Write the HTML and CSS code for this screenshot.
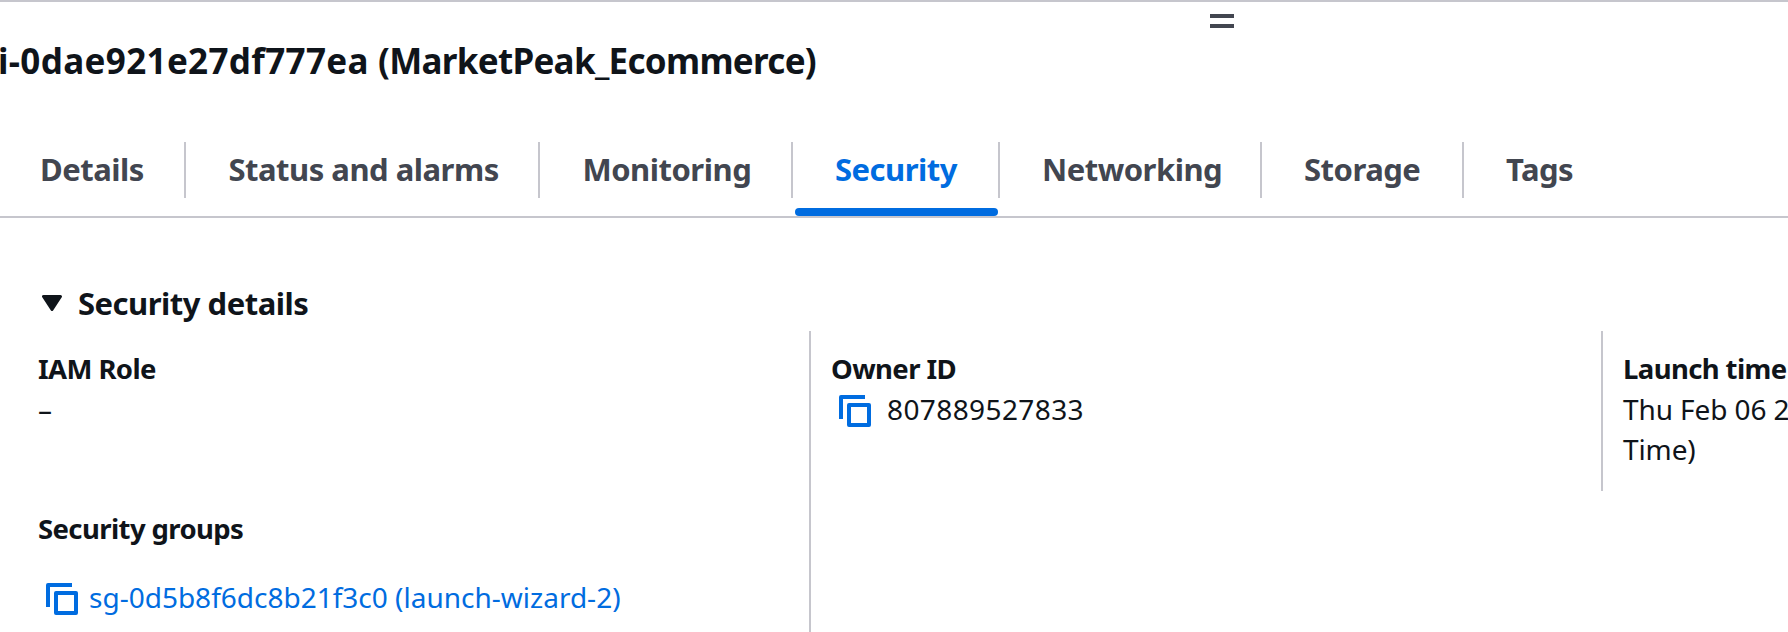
FILE: index.html
```html
<!DOCTYPE html>
<html lang="en">
<head>
<meta charset="utf-8">
<title>Instance details</title>
<link rel="stylesheet" href="styles.css">
</head>
<body>
<svg class="sprite" width="0" height="0" aria-hidden="true">
  <symbol id="copy" viewBox="0 0 32 32">
    <path d="M26 2H2v22" fill="none" stroke="currentColor" stroke-width="4" stroke-linejoin="round"/>
    <path d="M10 10h20v20H10z" fill="none" stroke="currentColor" stroke-width="4" stroke-linejoin="round"/>
  </symbol>
</svg>
<section class="panel">
  <div class="handle"><svg width="24" height="14" viewBox="0 0 24 14"><path d="M0 0h24v4H0zM0 10h24v4H0z" fill="#424650"/></svg></div>
  <h1 class="title"><span class="instance-id">i-0dae921e27df777ea</span> <span class="instance-name">(MarketPeak_Ecommerce)</span></h1>
  <nav class="tabs">
    <a class="tab">Details</a>
    <a class="tab">Status and alarms</a>
    <a class="tab">Monitoring</a>
    <a class="tab active">Security</a>
    <a class="tab">Networking</a>
    <a class="tab">Storage</a>
    <a class="tab last">Tags</a>
  </nav>
  <h2 class="section-head">
    <svg class="caret" width="20" height="16" viewBox="0 0 20 16"><path d="M1.5 1.5h17L10 14.5z" fill="#0f141a" stroke="#0f141a" stroke-width="3" stroke-linejoin="round"/></svg>
    <span>Security details</span>
  </h2>
  <div class="columns">
    <div class="col first">
      <div class="label">IAM Role</div>
      <div class="value">–</div>
      <div class="label groups">Security groups</div>
      <div class="copy-row link"><svg class="copy" width="32" height="32"><use href="#copy"/></svg><a class="sg">sg-0d5b8f6dc8b21f3c0 (launch-wizard-2)</a></div>
    </div>
    <div class="col owner">
      <div class="label">Owner ID</div>
      <div class="copy-row"><svg class="copy" width="32" height="32"><use href="#copy"/></svg><span class="number">807889527833</span></div>
    </div>
    <div class="col launch">
      <div class="label">Launch time</div>
      <div class="value">Thu Feb 06 2</div>
      <div class="value">Time)</div>
    </div>
  </div>
</section>
</body>
</html>
```
FILE: styles.css
```css
* { box-sizing: border-box; }
body {
  margin: 0;
  background: #fff;
  color: #0f141a;
  font-family: "Noto Sans", "Open Sans", sans-serif;
  overflow: hidden;
}
.sprite { display: block; }
.panel {
  height: 632px;
  border-top: 2px solid #c6c6cd;
  display: flex;
  flex-direction: column;
  overflow: hidden;
}
.handle {
  height: 26px;
  padding: 12px 0 0 1210px;
  flex: none;
}
.handle svg { display: block; }
.title {
  margin: 11px 0 0 -2px;
  font-size: 35px;
  line-height: 44px;
  font-weight: 700;
  white-space: nowrap;
  flex: none;
}
.instance-id { letter-spacing: 0.35px; }
.instance-name { letter-spacing: -0.7px; }
.tabs {
  display: grid;
  grid-template-columns: 186px 354px 252.5px 207px 262px 202px 1fr;
  height: 135px;
  padding: 59px 0 18px;
  border-bottom: 2px solid #c6c6cd;
  flex: none;
}
.tab {
  position: relative;
  height: 56px;
  padding-left: 42.5px;
  border-right: 2px solid #c6c6cd;
  color: #424650;
  font-size: 31px;
  font-weight: 700;
  letter-spacing: -0.5px;
  line-height: 54px;
  white-space: nowrap;
}
.tab:first-child { padding-left: 40px; }
.tab.last { border-right: 0; }
.tab.active { color: #006ce0; }
.tab.active::after {
  content: "";
  position: absolute;
  left: 2px;
  right: 0;
  bottom: -18px;
  height: 8px;
  border-radius: 4px;
  background: #006ce0;
}
.section-head {
  display: flex;
  align-items: center;
  gap: 16px;
  margin: 65px 0 8px;
  padding-left: 42px;
  font-size: 31px;
  font-weight: 700;
  letter-spacing: -0.5px;
  line-height: 40px;
  flex: none;
}
.columns {
  display: grid;
  grid-template-columns: 809px 792px 1fr;
  align-items: start;
  flex: 1;
}
.col {
  padding: 18px 0 22px 20px;
  border-left: 2px solid #c6c6cd;
  font-size: 28px;
  line-height: 40px;
  white-space: nowrap;
}
.col.first { padding-left: 38px; border-left: 0; }
.col.owner { height: 301px; }
.col.launch { height: 160px; overflow: hidden; }
.launch .value { letter-spacing: -0.1px; }
.label {
  font-size: 27.5px;
  font-weight: 700;
  letter-spacing: -0.6px;
}
.groups { margin-top: 80px; }
.copy-row {
  display: flex;
  align-items: center;
  padding-left: 8px;
}
.link { margin-top: 28px; color: #006ce0; }
.copy { color: #006ce0; flex: none; margin-top: 4px; }
.number { margin-left: 16px; letter-spacing: 0.4px; }
.sg { margin-left: 11px; }
```
